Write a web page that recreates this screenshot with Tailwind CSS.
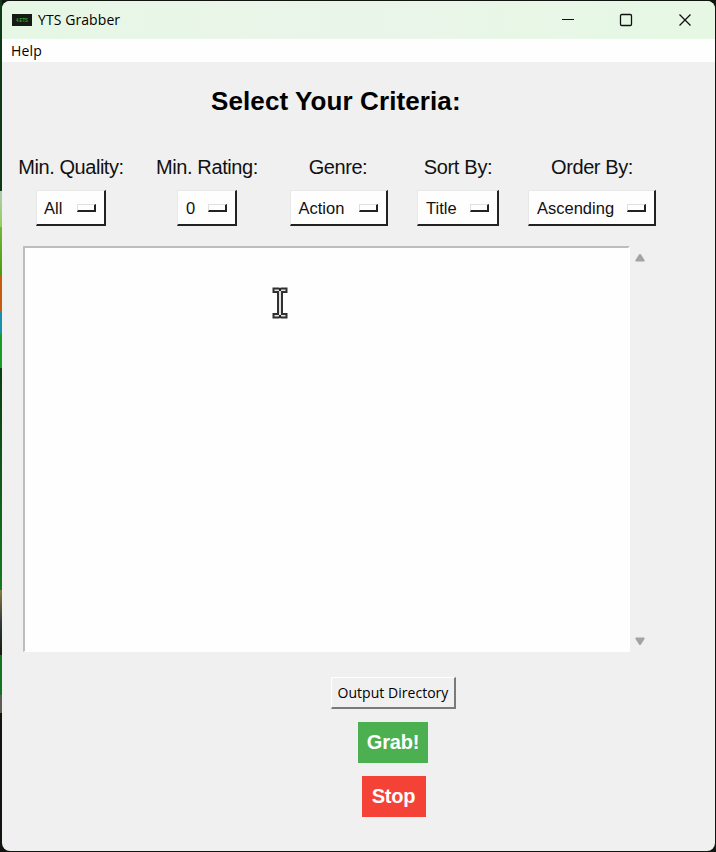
<!DOCTYPE html>
<html lang="en">
<head>
<meta charset="utf-8">
<title>YTS Grabber</title>
<script src="https://cdn.jsdelivr.net/npm/@tailwindcss/browser@4"></script>
</head>
<body class="relative h-[852px] w-[716px] overflow-hidden bg-[#10150f] pt-px pl-[2px] pr-px pb-px font-['Liberation_Sans',Arial,sans-serif] text-black">
<!-- desktop strip behind the left window edge -->
<div class="absolute left-0 top-0 flex h-full w-[2px] flex-col">
  <div class="h-[191px] bg-[#0c3a17]"></div>
  <div class="h-[36px] bg-linear-to-b from-[#b5c8ae] to-[#8fce58]"></div>
  <div class="h-[49px] bg-linear-to-b from-[#72b637] to-[#4b9b0a]"></div>
  <div class="h-[36px] bg-[#c65b14]"></div>
  <div class="h-[22px] bg-[#1591ac]"></div>
  <div class="h-[34px] bg-[#1b9a2a]"></div>
  <div class="h-[222px] bg-linear-to-b from-[#0b3d12] to-[#157a22]"></div>
  <div class="h-[65px] bg-linear-to-b from-[#8a7a40] via-[#333a38] to-[#161c10]"></div>
  <div class="h-[40px] bg-[#137322]"></div>
  <div class="h-[18px] bg-[#5e5d55]"></div>
  <div class="grow bg-[#10150f]"></div>
</div>

<div class="relative flex h-[850px] w-[713px] flex-col overflow-hidden rounded-[8px] bg-[#f0f0f0]">
  <header class="flex h-[38px] shrink-0 items-center bg-linear-to-r from-[#e6f7e5] via-[#eaf5e9] to-[#e6f8e4] pl-[10px]">
    <svg class="-mt-px h-[12px] w-[20px] shrink-0" viewBox="0 0 20 12"><rect width="20" height="12" fill="#151a15"/><text x="4" y="8.200" font-size="6" font-weight="bold" fill="#35a52b" textLength="12" lengthAdjust="spacingAndGlyphs">4.ETS</text></svg>
    <span class="-mt-[2px] ml-[6px] font-['Open_Sans','Noto_Sans',sans-serif] text-[14px] tracking-[0.08px]">YTS Grabber</span>
    <svg class="ml-auto mr-[23px] h-[14px] w-[132px]" viewBox="0 0 132 14" fill="none" stroke="#111" stroke-width="1.3"><path d="M2 6.500h12" stroke-width="1"/><rect x="60.500" y="1.500" width="11" height="11" rx="1.200"/><path d="M119.500 1.500l11 11M130.500 1.500l-11 11"/></svg>
  </header>
  <nav class="flex h-[23px] shrink-0 items-center bg-[#fefefe] pl-[9px]">
    <span class="font-['Open_Sans','Noto_Sans',sans-serif] text-[14px] tracking-[0.2px]">Help</span>
  </nav>

  <h1 class="mt-[23px] pl-[209px] text-[26px] leading-[32px] font-bold tracking-[0.1px] whitespace-nowrap">Select Your Criteria:</h1>

  <section class="mt-[38px] grid shrink-0 grid-cols-[138px_134px_128px_112px_156px] justify-items-center whitespace-nowrap text-[#111]">
    <span class="text-[20px] leading-[24px] tracking-[-0.45px]">Min. Quality:</span>
    <span class="text-[20px] leading-[24px] tracking-[-0.4px]">Min. Rating:</span>
    <span class="text-[20px] leading-[24px] tracking-[-0.45px]">Genre:</span>
    <span class="text-[20px] leading-[24px] tracking-[-0.3px]">Sort By:</span>
    <span class="text-[20px] leading-[24px] tracking-[-0.4px]">Order By:</span>

    <div class="mt-[11px] flex h-[36px] w-[70px] items-center justify-between border-t border-r-2 border-b-2 border-l border-t-[#e8e8e8] border-r-[#222] border-b-[#222] border-l-[#e8e8e8] bg-[#fefefe] pr-[8px] pl-[7px] text-[16.5px]"><span class="pt-[2px]">All</span><i class="mt-px h-[8px] w-[19px] border-t border-r-2 border-b-2 border-l border-t-[#e0e0e0] border-r-[#222] border-b-[#222] border-l-[#e0e0e0]"></i></div>
    <div class="mt-[11px] flex h-[36px] w-[60px] items-center justify-between border-t border-r-2 border-b-2 border-l border-t-[#e8e8e8] border-r-[#222] border-b-[#222] border-l-[#e8e8e8] bg-[#fefefe] pr-[8px] pl-[8px] text-[16.5px]"><span class="pt-[2px]">0</span><i class="mt-px h-[8px] w-[19px] border-t border-r-2 border-b-2 border-l border-t-[#e0e0e0] border-r-[#222] border-b-[#222] border-l-[#e0e0e0]"></i></div>
    <div class="mt-[11px] ml-px flex h-[36px] w-[98px] items-center justify-between border-t border-r-2 border-b-2 border-l border-t-[#e8e8e8] border-r-[#222] border-b-[#222] border-l-[#e8e8e8] bg-[#fefefe] pr-[8px] pl-[8px] text-[16.5px]"><span class="pt-[2px]">Action</span><i class="mt-px h-[8px] w-[19px] border-t border-r-2 border-b-2 border-l border-t-[#e0e0e0] border-r-[#222] border-b-[#222] border-l-[#e0e0e0]"></i></div>
    <div class="mt-[11px] flex h-[36px] w-[82px] items-center justify-between border-t border-r-2 border-b-2 border-l border-t-[#e8e8e8] border-r-[#222] border-b-[#222] border-l-[#e8e8e8] bg-[#fefefe] pr-[8px] pl-[8px] text-[16.5px]"><span class="pt-[2px]">Title</span><i class="mt-px h-[8px] w-[19px] border-t border-r-2 border-b-2 border-l border-t-[#e0e0e0] border-r-[#222] border-b-[#222] border-l-[#e0e0e0]"></i></div>
    <div class="mt-[11px] flex h-[36px] w-[128px] items-center justify-between border-t border-r-2 border-b-2 border-l border-t-[#e8e8e8] border-r-[#222] border-b-[#222] border-l-[#e8e8e8] bg-[#fefefe] pr-[8px] pl-[8px] text-[16.5px]"><span class="pt-[2px]">Ascending</span><i class="mt-px h-[8px] w-[19px] border-t border-r-2 border-b-2 border-l border-t-[#e0e0e0] border-r-[#222] border-b-[#222] border-l-[#e0e0e0]"></i></div>
  </section>

  <main class="mt-[20px] ml-[21px] flex h-[406px] shrink-0">
    <div class="relative w-[607px] border-t-2 border-r-2 border-b border-l-2 border-t-[#bdbdbd] border-r-[#fefefe] border-b-[#fefefe] border-l-[#bdbdbd] bg-[#fefefe]">
      <svg class="absolute top-[39px] left-[247px] h-[32px] w-[16px]" viewBox="0 0 16 32"><path d="M1.500 1.500h5L8 2l1.500-.500h5V5H10v22h4.500v3.500h-5L8 30l-1.500.500h-5V27H6V5H1.500z" fill="#e4e4e4" stroke="#303030" stroke-width="2"/><path d="M7 3h2M7 29h2" stroke="#222" stroke-width="2"/></svg>
    </div>
    <div class="ml-[5px] flex w-[10px] flex-col justify-between pt-[7px] pb-[6px]">
      <svg class="h-[9px] w-[10px]" viewBox="0 0 10 9"><path d="M4 1.500Q5 .500 6 1.500L9.500 7Q10 8.500 9 8.500H1Q0 8.500.500 7z" fill="#a3a3a3"/></svg>
      <svg class="h-[9px] w-[10px]" viewBox="0 0 10 9"><path d="M4 7.500Q5 8.500 6 7.500L9.500 2Q10 .500 9 .500H1Q0 .500.500 2z" fill="#a3a3a3"/></svg>
    </div>
  </main>

  <footer class="mt-[25px] ml-[329px] flex w-[125px] flex-col items-center whitespace-nowrap">
    <button class="h-[32px] w-[125px] border-t border-r-2 border-b-2 border-l border-t-white border-r-[#7a7a7a] border-b-[#7a7a7a] border-l-white bg-[#f0f0f0] font-['Open_Sans','Noto_Sans',sans-serif] text-[14px] leading-[28px] tracking-[0.03px]">Output Directory</button>
    <button class="mt-[13px] mr-px h-[41px] w-[70px] bg-[#4caf50] pb-[2px] text-[20px] font-bold tracking-[-0.2px] text-[#fefefe]">Grab!</button>
    <button class="mt-[13px] h-[41px] w-[64px] bg-[#f44336] pb-[2px] text-[20px] font-bold tracking-[-0.2px] text-[#fefefe]">Stop</button>
  </footer>
</div>
</body>
</html>
